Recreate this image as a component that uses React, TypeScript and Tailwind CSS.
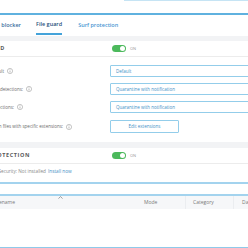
import React from "react";

const InfoIcon = () => (
  <svg width="6" height="6" viewBox="0 0 12 12" className="shrink-0">
    <circle cx="6" cy="6" r="5.2" fill="none" stroke="#8e8e8e" strokeWidth="1" />
    <rect x="5.4" y="5" width="1.2" height="4" fill="#8e8e8e" />
    <rect x="5.4" y="2.8" width="1.2" height="1.2" fill="#8e8e8e" />
  </svg>
);

const EndText = ({ w, children, className }: { w: string; children: React.ReactNode; className?: string }) => (
  <div className={`${w} flex justify-end shrink-0`}>
    <span className={`whitespace-nowrap ${className ?? ""}`}>{children}</span>
  </div>
);

const Toggle = () => (
  <div className="flex items-center">
    <div className="w-[14px] h-[7px] rounded-full bg-[#4cb95c] flex items-center justify-end pr-[1px]">
      <div className="w-[5px] h-[5px] rounded-full bg-white" />
    </div>
    <span className="ml-[4px] text-[4px] text-[#9a9a9a]">ON</span>
  </div>
);

const Label = ({ w, text }: { w: string; text: string }) => (
  <div className="w-[110px] shrink-0 flex items-center">
    <EndText w={w} className="text-[4.5px] text-[#6b6b6b]">{text}</EndText>
    <div className="ml-[3px]">
      <InfoIcon />
    </div>
  </div>
);

const Select = ({ text }: { text: string }) => (
  <div className="w-[150px] h-[12px] shrink-0 border border-[#93cdea] rounded-[1px] flex items-center pl-[5px] text-[4.5px] text-[#3f8fc6]">
    {text}
  </div>
);

export default function App() {
  return (
    <div className="w-[248px] h-[248px] overflow-hidden bg-white flex flex-col font-['Open_Sans',sans-serif]">
      <div className="h-[13px] shrink-0">
        <div className="ml-[124px] h-px bg-[#c6e4f4]" />
      </div>
      <div className="h-[2px] shrink-0 bg-[#5fb1df]" />
      {/* tabs */}
      <div className="h-[20px] shrink-0 flex items-stretch text-[5.5px] font-semibold">
        <div className="flex items-center">
          <EndText w="w-[21px]" className="text-[#3a6c9c]">Ransomware blocker</EndText>
        </div>
        <div className="ml-[15px] flex items-center border-b-2 border-[#44a3da] text-[#244f7b]">File guard</div>
        <div className="ml-[16px] flex items-center text-[#4896d2]">Surf protection</div>
      </div>
      <div className="h-px shrink-0" />
      <div className="h-[5px] shrink-0 bg-[#f2f3f5]" />
      {/* section 1 header */}
      <div className="h-[15px] shrink-0 flex items-center">
        <div className="w-[112px] shrink-0">
          <EndText w="w-[5px]" className="text-[5.5px] font-bold text-[#5a5a5a] tracking-[0.6px]">FILE GUARD</EndText>
        </div>
        <Toggle />
      </div>
      <div className="h-px shrink-0 bg-[#ececec]" />
      <div className="h-[8px] shrink-0" />
      <div className="h-[12px] shrink-0 flex items-center">
        <Label w="w-[4px]" text="Scan mode on file access: Default" />
        <Select text="Default" />
      </div>
      <div className="h-[6px] shrink-0" />
      <div className="h-[12px] shrink-0 flex items-center">
        <Label w="w-[23px]" text="Action on malware detections:" />
        <Select text="Quarantine with notification" />
      </div>
      <div className="h-[6px] shrink-0" />
      <div className="h-[12px] shrink-0 flex items-center">
        <Label w="w-[14px]" text="Action on PUP detections:" />
        <Select text="Quarantine with notification" />
      </div>
      <div className="h-[7px] shrink-0" />
      <div className="h-[13px] shrink-0 flex items-center">
        <Label w="w-[63px]" text="Scan files with specific extensions:" />
        <div className="w-[69px] h-[13px] shrink-0 border border-[#93cdea] rounded-[1px] flex items-center justify-center text-[4.5px] text-[#3f8fc6]">
          Edit extensions
        </div>
      </div>
      <div className="h-[9px] shrink-0" />
      <div className="h-[6px] shrink-0 bg-[#f2f3f5]" />
      {/* section 2 header */}
      <div className="h-[15px] shrink-0 flex items-center">
        <div className="w-[112px] shrink-0">
          <EndText w="w-[30px]" className="text-[5.5px] font-bold text-[#5a5a5a] tracking-[0.6px]">EMAIL PROTECTION</EndText>
        </div>
        <Toggle />
      </div>
      <div className="h-px shrink-0 bg-[#ececec]" />
      <div className="h-[18px] shrink-0 flex items-center pb-[2px]">
        <EndText w="w-[46px]" className="text-[4.7px] text-[#8a8a8a]">Email Security: Not installed</EndText>
        <span className="ml-[2px] text-[4.7px] text-[#3f8fc6] whitespace-nowrap">Install now</span>
      </div>
      <div className="h-[2px] shrink-0 bg-[#a3d3ee]" />
      <div className="h-[10px] shrink-0" />
      <div className="h-[2px] shrink-0 bg-[#a3d3ee]" />
      {/* table header */}
      <div className="relative h-[13px] shrink-0 bg-[#f6f7f9] flex items-stretch text-[5px] text-[#7a7a7a]">
        <svg className="absolute left-[58px] top-[0px]" width="5" height="3" viewBox="0 0 5 3">
          <path d="M0.5 2.6 L2.5 0.5 L4.5 2.6" fill="none" stroke="#8a8a8a" strokeWidth="0.8" />
        </svg>
        <div className="w-[137px] shrink-0 flex items-center">
          <EndText w="w-[15px]">Filename</EndText>
        </div>
        <div className="w-[49px] shrink-0 flex items-center pl-[7px] border-r border-[#ebedf0]">Mode</div>
        <div className="w-[48px] shrink-0 flex items-center pl-[7px] border-r border-[#ebedf0]">Category</div>
        <div className="flex items-center pl-[8px] whitespace-nowrap">Date</div>
      </div>
      <div className="flex-1" />
      <div className="h-px shrink-0 bg-[#8fcaea]" />
    </div>
  );
}
